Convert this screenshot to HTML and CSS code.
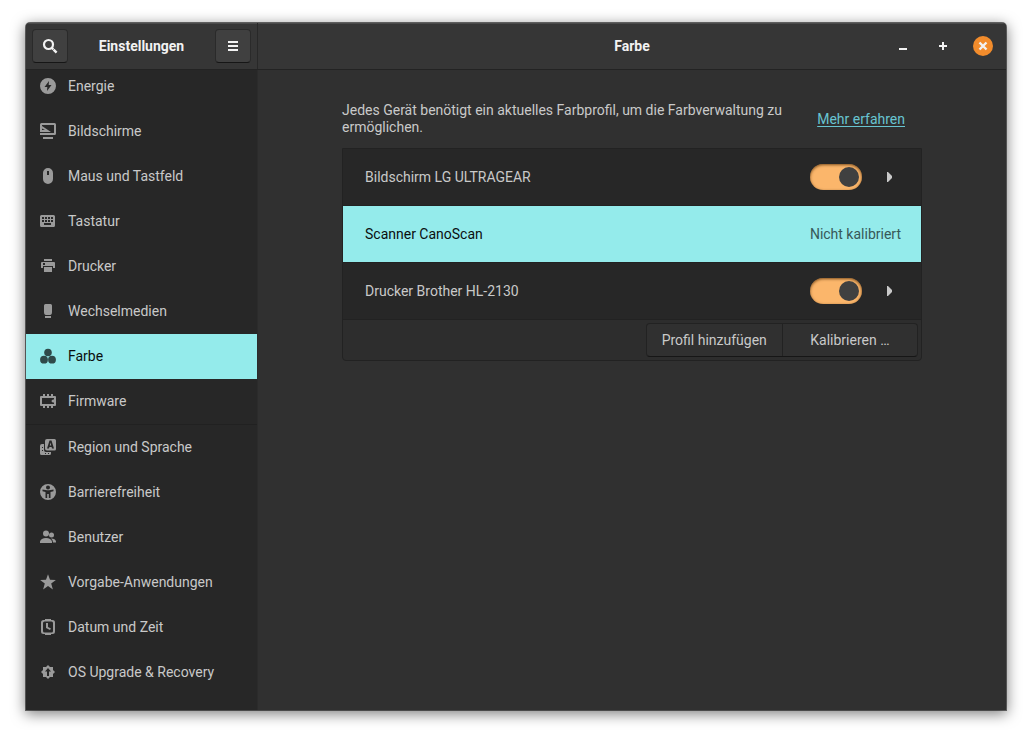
FILE: index.html
```html
<!DOCTYPE html>
<html lang="de">
<head>
<meta charset="utf-8">
<title>Einstellungen – Farbe</title>
<link rel="stylesheet" href="styles.css">
</head>
<body>
<div class="window">
  <header class="titlebar">
    <div class="titlebar-side">
      <button class="tool-button" type="button" aria-label="Suchen">
        <svg viewBox="0 0 16 16" width="16" height="16"><circle cx="6.500" cy="6.500" r="4.500" fill="none" stroke="currentColor" stroke-width="2.200"/><path d="M9.800 9.800l1.500 1.500M11.600 11.600l3 3" stroke="currentColor" stroke-width="2.400"/></svg>
      </button>
      <h1 class="title">Einstellungen</h1>
      <button class="tool-button" type="button" aria-label="Menü">
        <svg viewBox="0 0 16 16" width="16" height="16"><path d="M3 3h10v2H3zM3 7h10v2H3zM3 11h10v2H3z" fill="currentColor"/></svg>
      </button>
    </div>
    <div class="titlebar-main">
      <h2 class="title">Farbe</h2>
      <div class="window-controls">
        <button class="control" type="button" aria-label="Minimieren"><svg viewBox="0 0 16 16" width="16" height="16"><path d="M4 10h8v2H4z" fill="currentColor"/></svg></button>
        <button class="control" type="button" aria-label="Maximieren"><svg viewBox="0 0 16 16" width="16" height="16"><path d="M7 4h2v3h3v2H9v3H7V9H4V7h3z" fill="currentColor"/></svg></button>
        <button class="control control-close" type="button" aria-label="Schließen"><svg viewBox="0 0 16 16" width="16" height="16"><path d="M4.500 4.500l7 7M11.500 4.500l-7 7" stroke="currentColor" stroke-width="2.400"/></svg></button>
      </div>
    </div>
  </header>
  <div class="body">
    <nav class="sidebar">
      <ul class="nav-list">
        <li><a class="nav-item" href="#energie"><svg viewBox="0 0 16 16" width="16" height="16"><path fill-rule="evenodd" d="M8 0a8 8 0 100 16A8 8 0 008 0zM9 3L4.500 9H7.300L7 13l4.500-6H8.700z"/></svg>Energie</a></li>
        <li><a class="nav-item" href="#bildschirme"><svg viewBox="0 0 16 16" width="16" height="16"><path fill-rule="evenodd" d="M1.500 0H14.500Q16 0 16 1.500V10.500Q16 12 14.500 12H0V10H14V2H2V3L11 9H0V1.500Q0 0 1.500 0zM2 5.500V7H5zM3 14H13V16H3z"/></svg>Bildschirme</a></li>
        <li><a class="nav-item" href="#maus"><svg viewBox="0 0 16 16" width="16" height="16"><path fill-rule="evenodd" d="M8 0a5 5 0 00-5 5v6a5 5 0 0010 0V5a5 5 0 00-5-5zM7 3h2v4H7z"/></svg>Maus und Tastfeld</a></li>
        <li><a class="nav-item" href="#tastatur"><svg viewBox="0 0 16 16" width="16" height="16"><path fill-rule="evenodd" d="M1.500 2h12Q15 2 15 3.500v9Q15 14 13.500 14h-12Q0 14 0 12.500v-9Q0 2 1.500 2zM2 4v2h2V4zM5 4v2h2V4zM8 4v2h2V4zM11 4v2h2V4zM2 7v2h2V7zM5 7v2h2V7zM8 7v2h2V7zM11 7v2h2V7zM4 10v2h7v-2z"/></svg>Tastatur</a></li>
        <li><a class="nav-item" href="#drucker"><svg viewBox="0 0 16 16" width="16" height="16"><path fill-rule="evenodd" d="M4 1h8v2H4zM2 4h12q1 0 1 1v5h-2V8H3v2H1V5q0-1 1-1zM3 5v2h2V5zM4 9h8v5H4z"/></svg>Drucker</a></li>
        <li><a class="nav-item" href="#wechselmedien"><svg viewBox="0 0 16 16" width="16" height="16"><path d="M5.500 1h5Q12 1 12 2.500V9q0 3-2 3H6q-2 0-2-3V2.500Q4 1 5.500 1zM5 13h6v2H5z"/></svg>Wechselmedien</a></li>
        <li><a class="nav-item is-selected" href="#farbe" aria-current="page"><svg viewBox="0 0 16 16" width="16" height="16"><circle cx="8" cy="4.500" r="3.800"/><circle cx="4" cy="11.700" r="3.900"/><circle cx="12" cy="11.700" r="3.900"/></svg>Farbe</a></li>
        <li><a class="nav-item" href="#firmware"><svg viewBox="0 0 16 16" width="16" height="16"><path fill-rule="evenodd" d="M3 1h2v2h2V1h2v2h2V1h2v2h2q1 0 1 1v8q0 1-1 1h-2v2h-2v-2H9v2H7v-2H5v2H3v-2H1q-1 0-1-1V4q0-1 1-1h2zM2 5v6h12V9.500h-1Q11.500 9 11.500 8T13 6.500h1V5z"/></svg>Firmware</a></li>
        <li class="group-start"><a class="nav-item" href="#region"><svg viewBox="0 0 16 16" width="16" height="16"><path fill-rule="evenodd" d="M7 0h7.500Q16 0 16 1.500V10q0 1.500-1.500 1.500H7Q5 11.500 5 9.500V2q0-2 2-2zM9.500 1.500L7 9.500h2L9.400 8h2.200l.4 1.500h2l-2.500-8zM10.500 3.500l.7 3H9.800z"/><path fill-rule="evenodd" d="M2 5h2v6q0 2 2 2h5v1.500Q11 16 9.500 16h-8Q0 16 0 14.500V7q0-2 2-2zM2 8v1h1V8zM2 11v1h1v-1zM5 14v1h1v-1zM8 14v1h1v-1z"/></svg>Region und Sprache</a></li>
        <li><a class="nav-item" href="#barrierefreiheit"><svg viewBox="0 0 16 16" width="16" height="16"><path fill-rule="evenodd" d="M8 0a8 8 0 100 16A8 8 0 008 0zM8 1.500a2 2 0 110 4 2 2 0 010-4zM2.500 5.500L7 6.200h2l4.500-.7v1.700L10.500 8v6H8.800v-4H7.200v4H5.500V8l-3-.8z"/></svg>Barrierefreiheit</a></li>
        <li><a class="nav-item" href="#benutzer"><svg viewBox="0 0 16 16" width="16" height="16"><circle cx="6" cy="4.500" r="3"/><circle cx="11.500" cy="6" r="2.500"/><path d="M0 14v-1.500Q1 9 6 9t6 3.500V14zM11 9.500q4.500 0 5 3V13.500h-3Q13 11 11 9.500z"/></svg>Benutzer</a></li>
        <li><a class="nav-item" href="#vorgabe"><svg viewBox="0 0 16 16" width="16" height="16"><path d="M8 .3l2 5.500 5.900.2-4.700 3.600 1.700 5.800L8 12l-4.900 3.400 1.700-5.800L.1 6l5.900-.2z"/></svg>Vorgabe-Anwendungen</a></li>
        <li><a class="nav-item" href="#datum"><svg viewBox="0 0 16 16" width="16" height="16"><path fill-rule="evenodd" d="M5 0h6v1h1.500Q15 1 15 3.500v9q0 2.500-2.500 2.500H11v1H5v-1H3.500Q1 15 1 12.500v-9Q1 1 3.500 1H5zM4.500 2.500Q3 2.500 3 4v8q0 1.500 1.500 1.500h7Q13 13.500 13 12V4q0-1.500-1.500-1.500zM6 4h2v4l3 1.500-1 1.500-4-2z"/></svg>Datum und Zeit</a></li>
        <li><a class="nav-item" href="#upgrade"><svg viewBox="0 0 16 16" width="16" height="16"><path fill-rule="evenodd" d="M8 1l2 2h3v3l2 2-2 2v3h-3l-2 2-2-2H3v-3L1 8l2-2V3h3zM8 4L5 7.500h2V12h2V7.500h2z"/></svg>OS Upgrade &amp; Recovery</a></li>
      </ul>
    </nav>
    <main class="content">
      <div class="panel">
        <div class="intro">
          <p class="intro-text">Jedes Gerät benötigt ein aktuelles Farbprofil, um die Farbverwaltung zu ermöglichen.</p>
          <a class="intro-link" href="#hilfe">Mehr erfahren</a>
        </div>
        <div class="device-box">
          <ul class="device-list">
            <li class="device">
              <label class="device-name" for="lg">Bildschirm LG ULTRAGEAR</label>
              <input class="switch" id="lg" type="checkbox" role="switch" checked>
              <button class="expander" type="button" aria-label="Profile anzeigen"><svg viewBox="0 0 16 16" width="16" height="16"><path d="M6 3h1l4 4v2l-4 4H6z" fill="currentColor"/></svg></button>
            </li>
            <li class="device is-selected">
              <span class="device-name">Scanner CanoScan</span>
              <span class="device-status">Nicht kalibriert</span>
            </li>
            <li class="device">
              <label class="device-name" for="brother">Drucker Brother HL-2130</label>
              <input class="switch" id="brother" type="checkbox" role="switch" checked>
              <button class="expander" type="button" aria-label="Profile anzeigen"><svg viewBox="0 0 16 16" width="16" height="16"><path d="M6 3h1l4 4v2l-4 4H6z" fill="currentColor"/></svg></button>
            </li>
          </ul>
          <div class="toolbar">
            <div class="button-group">
              <button class="action" type="button">Profil hinzufügen</button>
              <button class="action" type="button">Kalibrieren …</button>
            </div>
          </div>
        </div>
      </div>
    </main>
  </div>
</div>
</body>
</html>
```
FILE: styles.css
```css
* { box-sizing: border-box; }
body {
  margin: 0;
  min-height: 100vh;
  padding: 23px 26px 29px;
  display: flex;
  background: #fff;
  color: #c9c9c9;
  font: 14px/17px Roboto, "Liberation Sans", sans-serif;
}
button { font: inherit; color: inherit; margin: 0; padding: 0; border: 0; background: none; }
ul { list-style: none; margin: 0; padding: 0; }
svg { display: block; flex: none; }
.window {
  flex: 1;
  display: flex;
  flex-direction: column;
  background: #303030;
  border-radius: 4px 4px 0 0;
  box-shadow: 0 0 0 1px rgba(0,0,0,.55), 0 3px 14px 1px rgba(0,0,0,.5);
  overflow: hidden;
}
.titlebar {
  display: grid;
  grid-template-columns: 232px 1fr;
  height: 47px;
  background: #363636;
  border-bottom: 1px solid #232323;
  box-shadow: inset 0 1px #4b4b4b;
  color: #f2f2f2;
}
.titlebar-side {
  display: flex;
  align-items: center;
  justify-content: space-between;
  padding: 0 6px;
  border-right: 1px solid #282828;
}
.title { margin: 0; font-size: 14px; font-weight: 700; }
.tool-button {
  display: grid;
  place-items: center;
  width: 36px;
  height: 34px;
  background: #404040;
  border: 1px solid #2a2a2a;
  border-bottom-color: #161616;
  border-radius: 4px;
}
.titlebar-main {
  display: grid;
  grid-template-columns: 1fr auto 1fr;
  align-items: center;
  padding: 0 13px;
}
.titlebar-main .title { grid-column: 2; }
.window-controls { justify-self: end; display: flex; gap: 20px; }
.control { display: grid; place-items: center; width: 20px; height: 20px; border-radius: 50%; }
.control-close { background: #f28c2c; }
.body { flex: 1; display: grid; grid-template-columns: 232px 1fr; }
.sidebar { background: #272727; border-right: 1px solid #2b2b2b; overflow: hidden; }
.nav-list { margin-top: -6px; }
.nav-item {
  display: flex;
  align-items: flex-start;
  gap: 12px;
  height: 45px;
  padding: 14px;
  color: inherit;
  text-decoration: none;
}
.nav-item svg { fill: #9a9a9a; }
.nav-item.is-selected { background: #94ebeb; color: #0b0f0f; }
.nav-item.is-selected svg { fill: #2f4a4a; }
.group-start { border-top: 1px solid #212121; }
.content { padding: 32px 24px; }
.panel { max-width: 580px; margin: 0 auto; }
.intro {
  display: flex;
  align-items: center;
  justify-content: space-between;
  gap: 24px;
  padding-right: 17px;
  margin-bottom: 12px;
}
.intro-text { margin: 0; max-width: 452px; }
.intro-link { flex: none; color: #68c4d0; text-underline-offset: 2px; }
.device-box { background: #2d2d2d; border: 1px solid #222; border-radius: 0 0 4px 4px; }
.device {
  display: flex;
  align-items: center;
  height: 57px;
  padding: 0 20px 0 22px;
  background: #272727;
  border-bottom: 1px solid #222;
}
.device-name { flex: 1; }
.device.is-selected { background: #94ebeb; color: #0b0f0f; }
.device-status { color: #375858; }
.switch {
  appearance: none;
  display: flex;
  justify-content: flex-end;
  width: 52px;
  height: 26px;
  margin: 0;
  padding: 3px;
  border-radius: 13px;
  background: #fbb66b;
  box-shadow: inset 0 1px 3px rgba(90,50,10,.8);
}
.switch::before { content: ""; width: 20px; height: 20px; border-radius: 50%; background: #404040; }
.switch:not(:checked) { justify-content: flex-start; background: #555; }
.expander { margin: 0 4px 0 19px; }
.toolbar { display: flex; justify-content: flex-end; padding: 3px; }
.button-group {
  display: grid;
  grid-template-columns: 1fr 1fr;
  border: 1px solid #222;
  border-bottom-color: #161616;
  border-radius: 4px;
  background: #303030;
}
.action { height: 32px; padding: 0 15px; }
.action + .action { border-left: 1px solid #222; }
```
